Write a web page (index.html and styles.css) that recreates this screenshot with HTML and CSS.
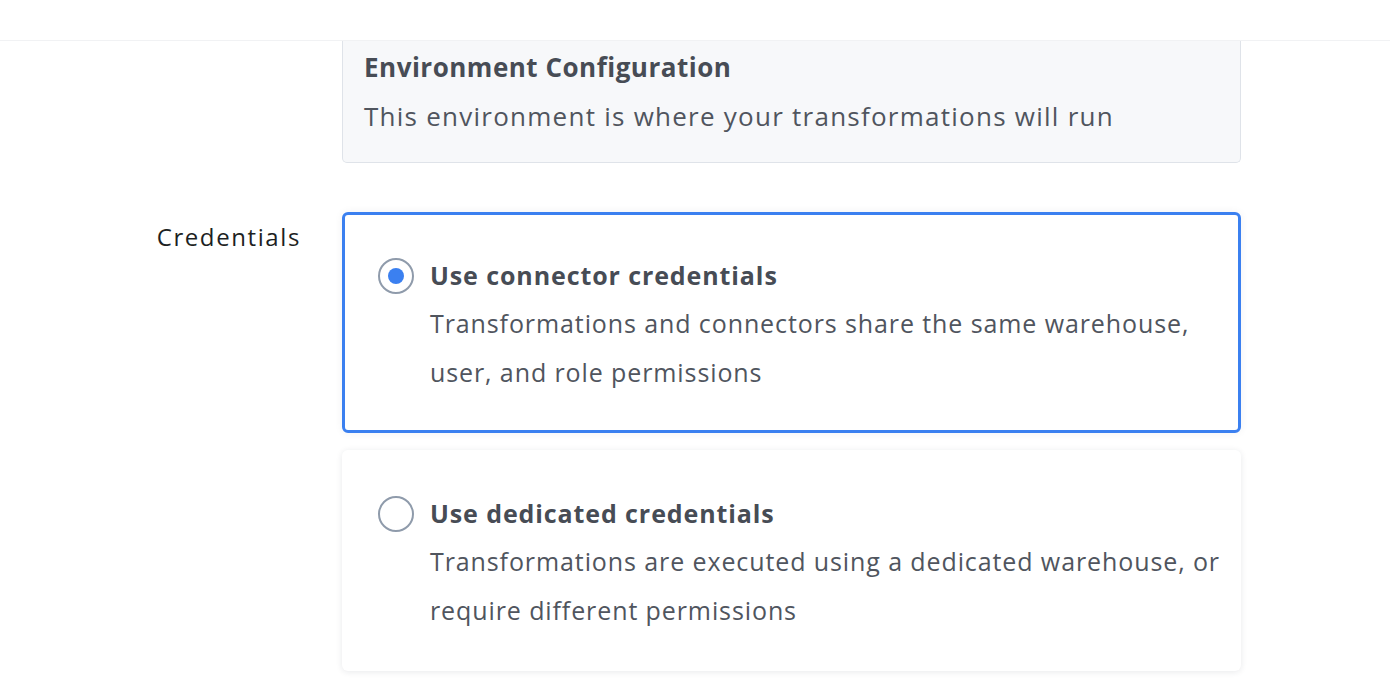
FILE: index.html
```html
<!DOCTYPE html>
<html>
<head>
<meta charset="utf-8">
<link rel="stylesheet" href="styles.css">
</head>
<body>
<header class="topbar"></header>
<main class="form">
  <div class="row">
    <div class="label"></div>
    <div class="info-card">
      <div class="info-title">Environment Configuration</div>
      <div class="info-desc">This environment is where your transformations will run</div>
    </div>
  </div>
  <div class="row row-cred">
    <div class="label">Credentials</div>
    <div class="options">
      <div class="option selected">
        <span class="radio checked"></span>
        <div class="option-text">
          <div class="option-title">Use connector credentials</div>
          <div class="option-desc">Transformations and connectors share the same warehouse,<br>user, and role permissions</div>
        </div>
      </div>
      <div class="option">
        <span class="radio"></span>
        <div class="option-text">
          <div class="option-title">Use dedicated credentials</div>
          <div class="option-desc">Transformations are executed using a dedicated warehouse, or<br>require different permissions</div>
        </div>
      </div>
    </div>
  </div>
</main>
</body>
</html>
```
FILE: styles.css
```css
* { box-sizing: border-box; }
html, body { margin: 0; padding: 0; background: #ffffff; }
body {
  font-family: "Open Sans", "Noto Sans", sans-serif;
  color: #474c55;
  width: 1390px;
  height: 690px;
  overflow: hidden;
}
.topbar {
  height: 41px;
  border-bottom: 1px solid #f1f2f4;
  background: #fff;
}
.row {
  display: grid;
  grid-template-columns: 342px 899px;
}
.label {
  text-align: right;
  padding-right: 41px;
  font-size: 24px;
  color: #1d1f23;
  padding-top: 8px;
  letter-spacing: 1.6px;
}
.info-card {
  background: #f7f8fa;
  border: 1px solid #dfe3e9;
  border-top: none;
  border-radius: 0 0 5px 5px;
  padding: 8px 21px 20px;
  height: 122px;
}
.info-title {
  font-size: 26px;
  font-weight: 700;
  line-height: 36px;
  color: #474c55;
  letter-spacing: 0.5px;
}
.info-desc {
  font-size: 26px;
  line-height: 50px;
  margin-top: 6px;
  letter-spacing: 1.25px;
  color: #50555e;
}
.row-cred { margin-top: 49px; }
.options {
  display: flex;
  flex-direction: column;
  gap: 17px;
}
.option {
  display: flex;
  gap: 16px;
  align-items: flex-start;
  height: 221px;
  border: 3px solid transparent;
  border-radius: 6px;
  padding: 42px 10px 0 33px;
  background: #fff;
  box-shadow: 0 1px 6px rgba(30, 40, 60, 0.10);
}
.option.selected {
  border-color: #3b80f0;
  box-shadow: 0 0 8px rgba(30, 40, 60, 0.06);
}
.radio {
  flex: none;
  width: 36px;
  height: 36px;
  margin-top: 1px;
  border: 2px solid #8f9bab;
  border-radius: 50%;
  display: flex;
  align-items: center;
  justify-content: center;
  background: #fff;
}
.radio.checked::after {
  content: "";
  width: 16px;
  height: 16px;
  border-radius: 50%;
  background: #3b80f0;
}
.option-text { display: flex; flex-direction: column; white-space: nowrap; }
.option-title {
  font-size: 25px;
  font-weight: 700;
  line-height: 38px;
  margin-top: -1px;
  color: #474c55;
  letter-spacing: 0.9px;
}
.option-desc {
  font-size: 25px;
  line-height: 49px;
  margin-top: 5px;
  letter-spacing: 0.9px;
  color: #50555e;
}
```
